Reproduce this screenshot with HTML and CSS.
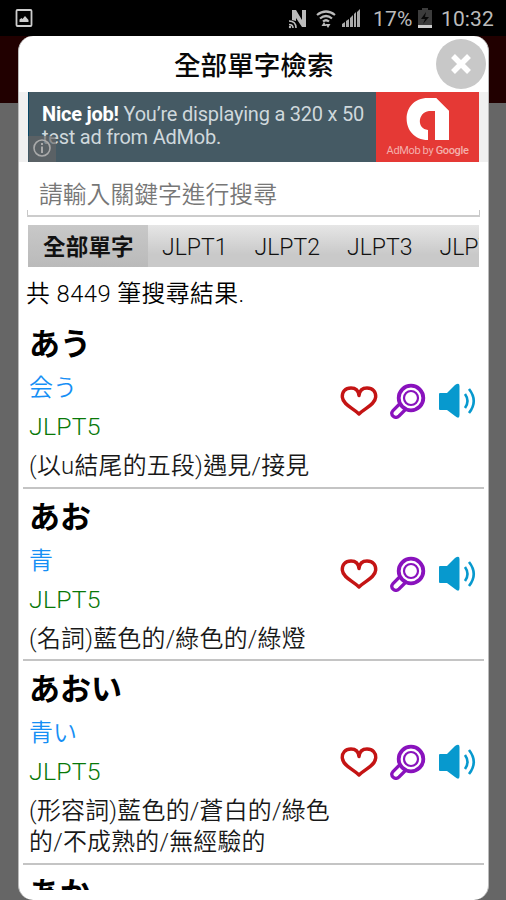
FILE: index.html
```html
<!DOCTYPE html>
<html lang="zh-Hant">
<head>
<meta charset="utf-8">
<meta name="viewport" content="width=device-width">
<title>全部單字檢索</title>
<link rel="stylesheet" href="styles.css">
</head>
<body>
<svg class="defs" aria-hidden="true">
  <symbol id="heart" viewBox="0 0 38 32"><path d="M19 10.500C18.500 6 16 3 11 3C5 3 2 7 2.300 12C3 20 13 23 19 29C25 23 35 20 35.700 12C36 7 33 3 27 3C22 3 19.500 6 19 10.500Z" fill="none" stroke="#c41414" stroke-width="3.400" stroke-linejoin="round"/></symbol>
  <symbol id="search" viewBox="0 0 36 36"><g fill="none" stroke="#8912bd"><path d="M10.500 20L3 27.500C-.5 32 5 36.500 9 33L16.500 25.500" stroke-width="3.200"/><circle cx="21" cy="15" r="12.300" stroke-width="3.800"/><circle cx="21" cy="15" r="7" stroke-width="2.200"/></g></symbol>
  <symbol id="sound" viewBox="0 0 38 36"><path d="M2 10H9L17 2Q21.500 -1 21.500 3V32Q21.500 37 17 33L9 27H2Q1 27 1 26V11Q1 10 2 10Z" fill="#0799ce"/><path d="M27 11Q32 18 27 25M31 6Q40.500 18 31 30" fill="none" stroke="#0799ce" stroke-width="2.600"/></symbol>
</svg>
<header class="status">
  <svg class="photo" viewBox="0 0 17 18"><rect x="1" y="1" width="15" height="16" rx="1" fill="none" stroke="#ccc" stroke-width="1.800"/><path d="M4 13V10.500L6 9L7 10L9.500 7L13 11V13Z" fill="#ccc"/></svg>
  <svg class="signals" viewBox="0 0 74 22">
    <path d="M4 11V1H8L14 11V1H18V18H14L8 9V12" fill="#bbb"/>
    <path d="M1 12Q8 12 8 19M1 15.500Q5 15.500 5 19" fill="none" stroke="#bbb" stroke-width="1.600"/><circle cx="2" cy="18" r="1.200" fill="#bbb"/>
    <path d="M29 6Q38 -1 47 6M32 9.500Q38 4.500 44 9.500M35 12.500Q38 10 41 12.500" fill="none" stroke="#bbb" stroke-width="2.200"/>
    <path d="M33.500 17L36 13L38.500 17ZM37.500 15H42.500L40 19Z" fill="#bbb"/>
    <path d="M54 18V15L57 13V18ZM58 18V12L61 10V18ZM62 18V9L65 6V18ZM66 18V5L68 3V18ZM69 18V3L72 0V18Z" fill="#aaa"/>
  </svg>
  <span class="percent">17%</span>
  <svg class="battery" viewBox="0 0 14 20"><path d="M4 0H10V2H14V20H0V2H4Z" fill="#3c3c3c"/><path d="M8 4L3 11H7L5 16L11 9H7Z" fill="#090909"/><path d="M0 17H14V20H0Z" fill="#ccc"/></svg>
  <span class="clock">10:32</span>
</header>
<main class="backdrop">
  <section class="dialog">
    <div class="heading">
      <h1>全部單字檢索</h1>
      <button class="close" aria-label="關閉"><svg viewBox="0 0 50 50"><path d="M17 17L33 33M33 17L17 33" stroke="#fff" stroke-width="5.500"/></svg></button>
    </div>
    <div class="ad-strip">
      <div class="ad">
        <p class="ad-copy"><b>Nice job!</b> You’re displaying a 320 x 50<br>test ad from AdMob.</p>
        <div class="admob">
          <svg viewBox="0 0 44 43"><path d="M22 43V33C10 32 12 15 23 14H33L43 14L30 1H22C-7 1 -6 43 22 43Z" fill="#fff"/><path d="M30 1L43 14V43H29V14H22Z" fill="#fff"/></svg>
          <span>AdMob by <b>Google</b></span>
        </div>
        <svg class="info" viewBox="0 0 28 26"><path d="M0 0H23Q28 0 28 5V26H0Z" fill="#666" opacity=".65"/><circle cx="14" cy="12" r="8" fill="none" stroke="#aaa" stroke-width="1.600"/><path d="M14 10.500V17M14 7V9" stroke="#aaa" stroke-width="2"/></svg>
      </div>
    </div>
    <label class="search"><input type="text" placeholder="請輸入關鍵字進行搜尋"></label>
    <nav class="tabs"><span class="tab active">全部單字</span><span class="tab">JLPT1</span><span class="tab">JLPT2</span><span class="tab">JLPT3</span><span class="tab">JLPT4</span></nav>
    <p class="count">共 8449 筆搜尋結果.</p>
    <div class="list" lang="ja">
      <article class="entry">
        <div class="text"><h2>あう</h2><p class="kanji">会う</p><p class="level">JLPT5</p><p class="meaning" lang="zh-Hant">(以u結尾的五段)遇見/接見</p></div>
        <div class="actions"><svg class="heart"><use href="#heart"/></svg><svg class="lens"><use href="#search"/></svg><svg class="sound"><use href="#sound"/></svg></div>
      </article>
      <article class="entry">
        <div class="text"><h2>あお</h2><p class="kanji">青</p><p class="level">JLPT5</p><p class="meaning" lang="zh-Hant">(名詞)藍色的/綠色的/綠燈</p></div>
        <div class="actions"><svg class="heart"><use href="#heart"/></svg><svg class="lens"><use href="#search"/></svg><svg class="sound"><use href="#sound"/></svg></div>
      </article>
      <article class="entry">
        <div class="text"><h2>あおい</h2><p class="kanji">青い</p><p class="level">JLPT5</p><p class="meaning" lang="zh-Hant">(形容詞)藍色的/蒼白的/綠色<br>的/不成熟的/無經驗的</p></div>
        <div class="actions"><svg class="heart"><use href="#heart"/></svg><svg class="lens"><use href="#search"/></svg><svg class="sound"><use href="#sound"/></svg></div>
      </article>
      <article class="entry"><div class="text"><h2>あか</h2></div></article>
    </div>
  </section>
</main>
</body>
</html>
```

FILE: styles.css
```css
* { box-sizing: border-box; }
body { margin: 0; width: 506px; height: 900px; overflow: hidden; background: #000; font-family: Roboto, "Noto Sans CJK TC", sans-serif; }
h1, h2, p { margin: 0; }
.defs { display: none; }
.status { height: 36px; display: flex; align-items: center; padding: 0 11px 0 15px; color: #bbb; font-size: 21px; white-space: nowrap; }
.photo { width: 18px; height: 18px; }
.signals { width: 74px; height: 22px; margin: 4px 0 0 255px; }
.percent { width: 41px; margin: 2px 0 0 11px; letter-spacing: .2px; }
.battery { width: 14px; height: 20px; margin-left: 4px; }
.clock { margin: 2px 0 0 9px; letter-spacing: .1px; }
.backdrop { height: 864px; padding: 0 17px 0 18px; background: linear-gradient(#210000 67px, #666 67px); }
.dialog { height: 864px; border-radius: 15px; background: #fff; overflow: hidden; border: solid #bbb; border-width: 0 1px; }
.heading { height: 56px; display: flex; align-items: center; justify-content: flex-end; padding-right: 2px; }
h1 { width: 160px; margin-right: 102px; padding-top: 3px; font-size: 26.600px; line-height: 40px; font-weight: 500; white-space: nowrap; color: #080808; }
.close { width: 50px; height: 50px; padding: 0; border: 0; border-radius: 50%; background: #c8c8c8; }
.close svg { width: 50px; height: 50px; display: block; }
.ad-strip { height: 70px; padding: 0 9px; background: #f0f0f0; }
.ad { height: 70px; position: relative; display: flex; background: #455a64; border-left: 1px solid #074665; }
.ad-copy { width: 347px; padding: 11px 0 0 13px; color: #cfd8dc; font-size: 20px; line-height: 23px; letter-spacing: -.22px; white-space: nowrap; }
.ad-copy b { color: #fff; }
.admob { flex: 1; display: flex; flex-direction: column; align-items: center; padding-top: 5px; background: #e53935; }
.admob svg { width: 44px; height: 43px; }
.admob span { margin-top: 3px; color: #f3b0ac; font-size: 11px; line-height: 15px; letter-spacing: -.35px; white-space: nowrap; }
.admob b { font-weight: 500; }
.info { position: absolute; width: 28px; height: 26px; left: -1px; bottom: 0; }
.search { display: flex; align-items: flex-end; height: 55px; margin: 0 8px; background: linear-gradient(#c8c8c8, #c8c8c8) left bottom / 1px 5px no-repeat, linear-gradient(#c8c8c8, #c8c8c8) right bottom / 1px 5px no-repeat; border-bottom: 2px solid #ccc; }
.search input { width: 100%; height: 53px; padding: 12px 0 0 12px; border: 0; background: transparent; font: 350 23.800px Roboto, "Noto Sans CJK TC", sans-serif; }
.search input::placeholder { color: #777; opacity: 1; }
.tabs { display: flex; height: 42px; margin: 8px 9px 0; overflow: hidden; background: linear-gradient(#e6e6e6, #c9c9c9 70%); color: #111; }
.tab { flex: 0 0 92.500px; padding-left: 14px; font-size: 23px; line-height: 45px; font-weight: 300; letter-spacing: 0; white-space: nowrap; }
.tab.active { flex-basis: 120px; padding-left: 15px; background: linear-gradient(#c8c8c8, #bababa); font-size: 22.500px; font-weight: 700; letter-spacing: .2px; }
.count { height: 49px; padding: 3px 0 0 7px; font-size: 23.800px; line-height: 48px; font-weight: 350; letter-spacing: .45px; white-space: nowrap; }
.list { height: 574px; overflow: hidden; margin: 0 4px; font-family: Roboto, "Noto Sans CJK JP", sans-serif; }
.entry { display: flex; min-height: 172.500px; border-bottom: 2px solid #c4c4c4; padding: 0 8px 0 6px; justify-content: space-between; }
.text { padding: 7px 0 5px; }
h2 { height: 44px; font-size: 31px; line-height: 44px; font-weight: 700; white-space: nowrap; }
.kanji { height: 40px; font-size: 24px; line-height: 42px; color: #168ff5; font-weight: 350; }
.level { height: 38px; font-size: 24.800px; line-height: 39px; font-weight: 300; color: #087808; letter-spacing: .25px; }
.meaning { min-height: 36px; padding-top: 6px; font: 350 23.900px/30.700px Roboto, "Noto Sans CJK TC", sans-serif; color: #181818; letter-spacing: .25px; white-space: nowrap; }
.actions { display: flex; align-items: center; gap: 12px; }
.heart { width: 38px; height: 32px; }
.lens { width: 36px; height: 36px; }
.sound { width: 38px; height: 36px; }
```
